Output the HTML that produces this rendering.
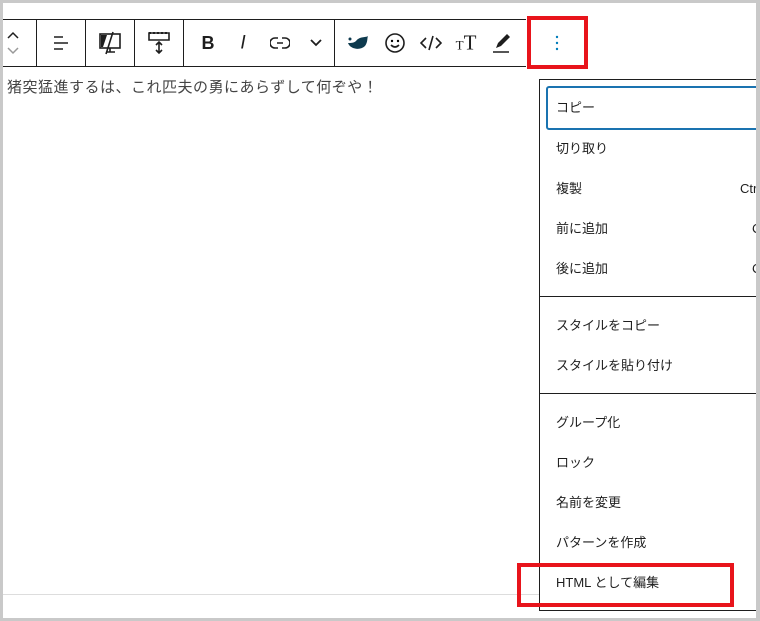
<!DOCTYPE html>
<html><head><meta charset="utf-8"><style>
*{box-sizing:border-box;margin:0;padding:0}
body{width:760px;height:621px;background:#fff;font-family:"Liberation Sans","Noto Sans CJK JP",sans-serif;position:relative;overflow:hidden}
.frame{position:absolute;left:0;top:0;width:760px;height:621px;border:3px solid #c9c9c9;border-right-width:4px;z-index:10;pointer-events:none}
.tb{position:absolute;left:3px;top:19px;width:523px;height:48px;border-top:1px solid #1e1e1e;border-bottom:1px solid #1e1e1e}
.sep{position:absolute;top:19px;width:1px;height:48px;background:#1e1e1e}
.ic{position:absolute;top:43px;transform:translate(-50%,-50%);line-height:1}
.txt{position:absolute;left:7px;top:79px;font-size:15px;line-height:18px;color:#444;letter-spacing:.5px}
.red{position:absolute;border:4px solid #e8141b}
.menu{position:absolute;left:539px;top:79px;width:230px;height:532px;border:1px solid #1e1e1e;background:#fff}
.it,.sc{position:absolute;font-size:13px;line-height:16px;height:16px;color:#1e1e1e}
.it{left:556px}
.hr{position:absolute;left:540px;width:220px;height:1px;background:#1e1e1e}
</style></head><body>
<div class="tb"></div>
<div class="sep" style="left:36px"></div><div class="sep" style="left:85px"></div><div class="sep" style="left:134px"></div><div class="sep" style="left:183px"></div><div class="sep" style="left:334px"></div>
<svg class="ic" style="left:13px" width="14" height="30" viewBox="0 0 14 30"><path d="M2 10l5-5 5 5" fill="none" stroke="#1e1e1e" stroke-width="1.5"/><path d="M2 20l5 5 5-5" fill="none" stroke="#999" stroke-width="1.5"/></svg>
<svg class="ic" style="left:61px" width="20" height="20"><path d="M3 4h9M3 10h14M3 16h9" stroke="#1e1e1e" stroke-width="1.6"/></svg>
<svg class="ic" style="left:110px" width="26" height="26" viewBox="0 0 26 26"><rect x="3" y="4" width="20" height="14" fill="none" stroke="#1e1e1e" stroke-width="1.6"/><path d="M4 5h6l-4 12H4z" fill="#1e1e1e"/><path d="M16 2L9 24M9 22h9M13 18v4" stroke="#1e1e1e" stroke-width="1.6" fill="none"/></svg>
<svg class="ic" style="left:159px" width="26" height="26" viewBox="0 0 26 26"><path d="M3 3h20v7H3zM13 12v11M10 15l3-3 3 3M10 20l3 3 3-3" fill="none" stroke="#1e1e1e" stroke-width="1.6"/><path d="M3 3h20" stroke="#1e1e1e" stroke-width="2" stroke-dasharray="2 2"/></svg>
<div class="ic" style="left:208px;font-weight:bold;font-size:18px;color:#1e1e1e">B</div>
<div class="ic" style="left:243px;font-style:italic;font-size:19px;color:#1e1e1e">I</div>
<svg class="ic" style="left:280px" width="20" height="14"><path d="M8 2H5a5 5 0 000 10h3M12 2h3a5 5 0 010 10h-3M7 7h6" fill="none" stroke="#1e1e1e" stroke-width="1.6"/></svg>
<svg class="ic" style="left:316px" width="14" height="10"><path d="M2 2l5 5 5-5" fill="none" stroke="#1e1e1e" stroke-width="1.8"/></svg>
<svg class="ic" style="left:358px" width="22" height="16" viewBox="0 0 22 16"><path d="M1 8c2 6 12 8 17 3 3-4 2-8 3-10-3 2-8 0-12 5-2 2-5 2-8 2z" fill="#0e3a4e"/><circle cx="3" cy="4" r="1.5" fill="#0e3a4e"/></svg>
<svg class="ic" style="left:395px" width="22" height="22"><circle cx="11" cy="11" r="9" fill="none" stroke="#1e1e1e" stroke-width="1.6"/><circle cx="8" cy="9" r="1.2"/><circle cx="14" cy="9" r="1.2"/><path d="M7 13q4 4 8 0" fill="none" stroke="#1e1e1e" stroke-width="1.6"/></svg>
<svg class="ic" style="left:431px" width="22" height="16"><path d="M6 3L1 8l5 5M16 3l5 5-5 5M13 1L9 15" fill="none" stroke="#1e1e1e" stroke-width="1.6"/></svg>
<div class="ic" style="left:466px;font-family:'Liberation Serif',serif;color:#1e1e1e;white-space:nowrap"><span style="font-size:13px">T</span><span style="font-size:21px">T</span></div>
<svg class="ic" style="left:502px" width="22" height="22"><path d="M5 16l2-5 9-9 3 3-9 9z" fill="#1e1e1e"/><path d="M2 20h16" stroke="#1e1e1e" stroke-width="1.5"/></svg>
<svg class="ic" style="left:557px" width="4" height="16"><circle cx="2" cy="2" r="1.2" fill="#007cba"/><circle cx="2" cy="8" r="1.2" fill="#007cba"/><circle cx="2" cy="14" r="1.2" fill="#007cba"/></svg>
<div class="red" style="left:527px;top:16px;width:61px;height:53px"></div>
<div class="txt">猪突猛進するは、これ匹夫の勇にあらずして何ぞや！</div>
<div style="position:absolute;left:3px;top:594px;width:536px;height:1px;background:#ddd"></div>
<div class="menu"></div>
<div style="position:absolute;left:546px;top:86px;width:220px;height:44px;border:2px solid #1a73b0;border-radius:3px"></div>
<div class="it" style="top:100px">コピー</div>
<div class="it" style="top:141px">切り取り</div>
<div class="it" style="top:181px">複製</div><div class="sc" style="left:740px;top:181px">Ctrl</div>
<div class="it" style="top:221px">前に追加</div><div class="sc" style="left:752px;top:221px">C</div>
<div class="it" style="top:261px">後に追加</div><div class="sc" style="left:752px;top:261px">C</div>
<div class="hr" style="top:296px"></div>
<div class="it" style="top:318px">スタイルをコピー</div>
<div class="it" style="top:358px">スタイルを貼り付け</div>
<div class="hr" style="top:393px"></div>
<div class="it" style="top:415px">グループ化</div>
<div class="it" style="top:455px">ロック</div>
<div class="it" style="top:495px">名前を変更</div>
<div class="it" style="top:535px">パターンを作成</div>
<div class="it" style="top:575px">HTML として編集</div>
<div class="red" style="left:517px;top:563px;width:217px;height:44px"></div>
<div class="frame"></div>
</body></html>
